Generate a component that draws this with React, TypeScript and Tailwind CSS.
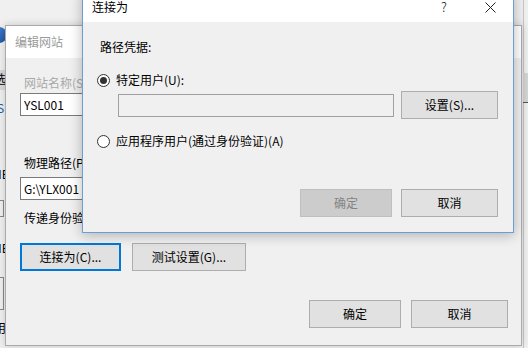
const FONT = "[font-family:'Noto_Sans_CJK_SC',sans-serif]";

function Btn({
  children,
  className = '',
  disabled = false,
  focused = false,
}: {
  children: React.ReactNode;
  className?: string;
  disabled?: boolean;
  focused?: boolean;
}) {
  const tone = disabled
    ? 'border border-[#bfbfbf] bg-[#cccccc] text-[#838383]'
    : focused
      ? 'border-2 border-[#0078d7] bg-[#e1e1e1] text-black'
      : 'border border-[#adadad] bg-[#e1e1e1] text-black';
  return (
    <div className={`flex h-[28px] items-center justify-center text-[12px] leading-none ${tone} ${className}`}>
      {children}
    </div>
  );
}

function Radio({ checked, label }: { checked?: boolean; label: string }) {
  return (
    <div className="flex h-[16px] items-center gap-[6px]">
      <span className="flex h-[13px] w-[13px] items-center justify-center rounded-full border border-[#333] bg-white">
        {checked && <span className="h-[7px] w-[7px] rounded-full bg-[#333]" />}
      </span>
      <span className="text-[12px] leading-[16px] text-black">{label}</span>
    </div>
  );
}

function ConnectAsDialog() {
  return (
    <div className="absolute left-[82px] top-[-9px] w-[432px] border border-[#6a9fd6] bg-white shadow-[0_2px_12px_rgba(0,0,0,0.28)]">
      <div className="flex h-[30px] items-center bg-white">
        <span className="flex-1 pl-[9px] text-[12px] text-black">连接为</span>
        <span className="w-[46px] text-center text-[13px] font-light text-[#222]">?</span>
        <span className="flex w-[46px] items-center justify-center">
          <svg width="11" height="11" viewBox="0 0 11 11">
            <path d="M0.5 0.5 L10.5 10.5 M10.5 0.5 L0.5 10.5" stroke="#222" strokeWidth="1" />
          </svg>
        </span>
      </div>
      <div className="flex h-[210px] flex-col bg-[#f0f0f0] pl-[14px] pr-[15px]">
        <div className="mt-[17px] pl-[3px] text-[12px] leading-[16px] text-black">路径凭据:</div>
        <div className="mt-[17px]">
          <Radio checked label="特定用户(U):" />
        </div>
        <div className="mt-[3px] flex items-center gap-[7px] pl-[21px]">
          <div className="h-[23px] w-[276px] border border-[#a0a0a0] bg-[#f0f0f0]" />
          <Btn className="w-[97px]">设置(S)...</Btn>
        </div>
        <div className="mt-[14px]">
          <Radio label="应用程序用户(通过身份验证)(A)" />
        </div>
        <div className="mt-[40px] flex justify-end gap-[9px]">
          <Btn disabled className="w-[92px]">确定</Btn>
          <Btn className="w-[97px]">取消</Btn>
        </div>
      </div>
    </div>
  );
}

function EditSiteDialog() {
  return (
    <div className="absolute left-[5px] top-[25px] w-[517px] border border-[#aaaaaa] bg-[#f0f0f0] shadow-[0_0_8px_rgba(0,0,0,0.18)]">
      <div className="flex h-[32px] items-center bg-white pl-[9px] text-[12px] text-[#9a9a9a]">编辑网站</div>
      <div className="flex h-[287px] flex-col pl-[14px] pr-[13px]">
        <div className="mt-[17px] pl-[4px] text-[12px] leading-[16px] text-[#a8a8a8]">网站名称(S):</div>
        <div className="mt-[2px] flex h-[23px] w-[300px] items-center border border-[#7a7a7a] bg-white pl-[3px] text-[12px] text-black">
          YSL001
        </div>
        <div className="mt-[39px] pl-[4px] text-[12px] leading-[16px] text-black">物理路径(P):</div>
        <div className="mt-[6px] flex h-[23px] w-[300px] items-center border border-[#7a7a7a] bg-white pl-[3px] text-[12px] text-black">
          G:\YLX001
        </div>
        <div className="mt-[10px] pl-[4px] text-[12px] leading-[16px] text-black">传递身份验证:</div>
        <div className="mt-[17px] flex gap-[11px]">
          <Btn focused className="w-[101px]">连接为(C)...</Btn>
          <Btn className="w-[114px]">测试设置(G)...</Btn>
        </div>
        <div className="mt-[29px] flex justify-end gap-[10px]">
          <Btn className="w-[92px]">确定</Btn>
          <Btn className="w-[97px]">取消</Btn>
        </div>
      </div>
    </div>
  );
}

function BackgroundWindow() {
  return (
    <div className="absolute inset-0 bg-[#f0f0f0] text-[12px] text-black">
      <div className="absolute left-[-9px] top-[27px] h-[16px] w-[16px] rounded-full bg-gradient-to-br from-[#4a8fe0] to-[#1d4f9c]" />
      <div className="absolute left-[-7px] top-[70px] h-[20px] w-[12px] bg-[#d9d9d9]" />
      <span className="absolute left-[-6px] top-[70px]">选</span>
      <span className="absolute left-[-3px] top-[99px] text-[#1a5fb4]">S</span>
      <span className="absolute left-[-7px] top-[165px]">NE</span>
      <div className="absolute left-[-4px] top-[200px] h-[17px] w-[8px] border border-[#888]" />
      <span className="absolute left-[-7px] top-[239px]">NE</span>
      <div className="absolute left-[-4px] top-[277px] h-[33px] w-[8px] border border-[#888]" />
      <span className="absolute left-[-6px] top-[319px]">用</span>
      <div className="absolute left-[523px] top-[0px] h-[348px] w-px bg-[#c8c8c8]" />
      <div className="absolute left-[523px] top-[73px] h-[30px] w-[6px] border-b border-[#555] bg-[#d6d6d6]" />
    </div>
  );
}

export default function App() {
  return (
    <div className={`relative h-[348px] w-[528px] overflow-hidden ${FONT}`}>
      <BackgroundWindow />
      <EditSiteDialog />
      <ConnectAsDialog />
    </div>
  );
}
